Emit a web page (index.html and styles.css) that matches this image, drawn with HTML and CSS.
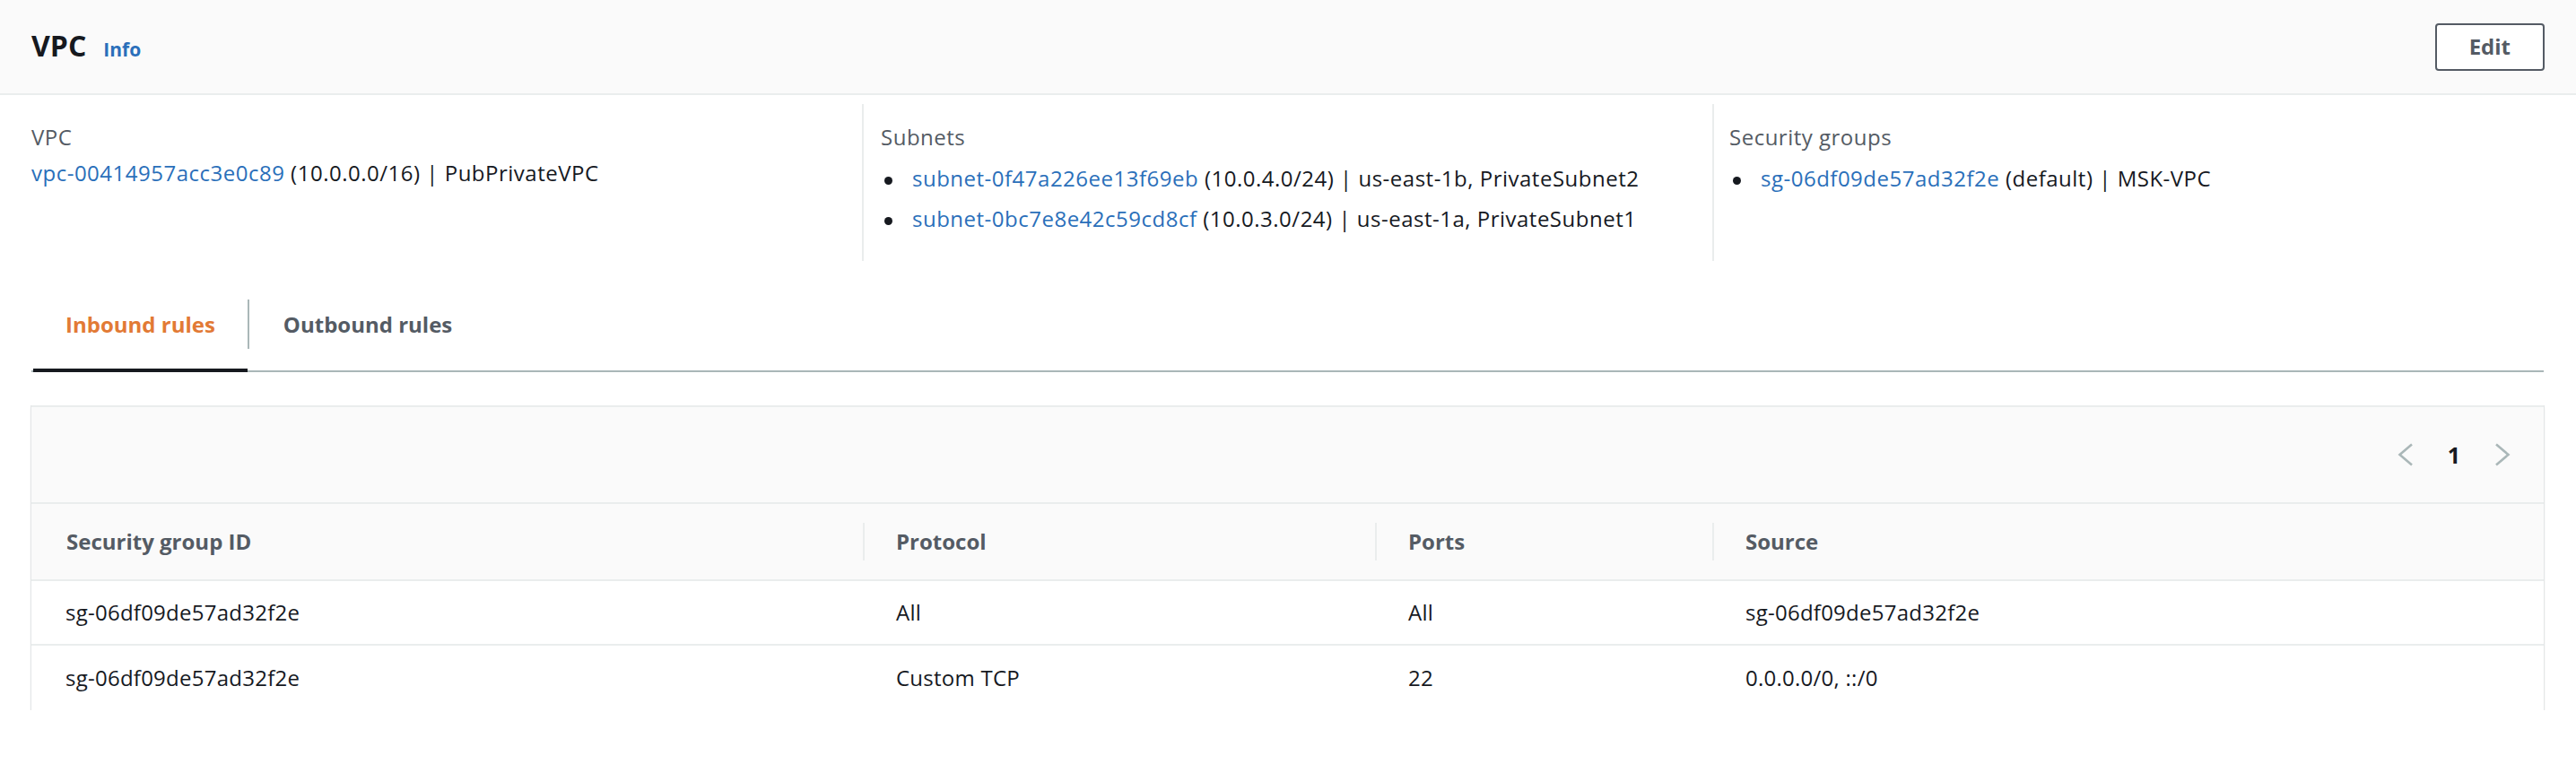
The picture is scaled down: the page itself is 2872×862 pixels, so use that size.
FILE: index.html
```html
<!DOCTYPE html>
<html lang="en">
<head>
<meta charset="utf-8">
<title>VPC</title>
<link rel="stylesheet" href="styles.css">
</head>
<body>
<header class="head">
  <div class="title-group">
    <h2 class="title">VPC</h2>
    <a class="info">Info</a>
  </div>
  <button class="btn">Edit</button>
</header>
<main class="page">
  <section class="columns">
    <div class="col">
      <div class="label">VPC</div>
      <div class="value"><a class="link">vpc-00414957acc3e0c89</a> (10.0.0.0/16) | PubPrivateVPC</div>
    </div>
    <div class="col col-bordered">
      <div class="label">Subnets</div>
      <ul class="list">
        <li><a class="link">subnet-0f47a226ee13f69eb</a> (10.0.4.0/24) | us-east-1b, PrivateSubnet2</li>
        <li><a class="link">subnet-0bc7e8e42c59cd8cf</a> (10.0.3.0/24) | us-east-1a, PrivateSubnet1</li>
      </ul>
    </div>
    <div class="col col-bordered col-last">
      <div class="label">Security groups</div>
      <ul class="list">
        <li><a class="link">sg-06df09de57ad32f2e</a> (default) | MSK-VPC</li>
      </ul>
    </div>
  </section>

  <nav class="tabs">
    <div class="tab tab-active">Inbound rules</div>
    <span class="tab-sep"></span>
    <div class="tab">Outbound rules</div>
  </nav>

  <div class="table-wrap">
    <div class="toolbar">
      <div class="pager">
        <svg class="chev" width="18" height="26" viewBox="0 0 18 26"><path d="M16 1.5 L2.5 13 L16 24.5" fill="none" stroke="#aab7b8" stroke-width="2.6"/></svg>
        <span class="page-num">1</span>
        <svg class="chev" width="18" height="26" viewBox="0 0 18 26"><path d="M2 1.5 L15.5 13 L2 24.5" fill="none" stroke="#aab7b8" stroke-width="2.6"/></svg>
      </div>
    </div>
    <div class="rules" role="table">
      <div class="row row-head" role="row">
        <div class="th" role="columnheader">Security group ID</div>
        <div class="th sep" role="columnheader">Protocol</div>
        <div class="th sep" role="columnheader">Ports</div>
        <div class="th sep" role="columnheader">Source</div>
      </div>
      <div class="row" role="row">
        <div class="td" role="cell">sg-06df09de57ad32f2e</div>
        <div class="td" role="cell">All</div>
        <div class="td" role="cell">All</div>
        <div class="td" role="cell">sg-06df09de57ad32f2e</div>
      </div>
      <div class="row row-last" role="row">
        <div class="td" role="cell">sg-06df09de57ad32f2e</div>
        <div class="td" role="cell">Custom TCP</div>
        <div class="td" role="cell">22</div>
        <div class="td" role="cell">0.0.0.0/0, ::/0</div>
      </div>
    </div>
  </div>
</main>
</body>
</html>
```

FILE: styles.css
```css
* { box-sizing: border-box; }

html, body {
  margin: 0;
  padding: 0;
  background: #ffffff;
}

body {
  font-family: "Open Sans", "Noto Sans", sans-serif;
  font-size: 24px;
  line-height: 40px;
  letter-spacing: 0.5px;
  color: #16191f;
}

.head {
  height: 106px;
  background: #fafafa;
  border-bottom: 2px solid #eaeded;
  display: flex;
  align-items: center;
  justify-content: space-between;
  padding: 0 35px 0 35px;
}

.title-group {
  display: flex;
  align-items: baseline;
}

.title {
  margin: 0;
  font-size: 32px;
  line-height: 44px;
  font-weight: 700;
  letter-spacing: 0;
  color: #16191f;
}

.info {
  margin-left: 19px;
  font-size: 21px;
  font-weight: 700;
  letter-spacing: 0;
  color: #2a6fba;
}

.btn {
  height: 53px;
  padding: 0 36px;
  background: #ffffff;
  border: 2px solid #545b64;
  border-radius: 4px;
  font-family: inherit;
  font-size: 24px;
  font-weight: 700;
  letter-spacing: 0;
  color: #545b64;
  line-height: 1;
}

.page {
  padding: 0 36px 0 35px;
}

.columns {
  display: grid;
  grid-template-columns: 926px 948px 1fr;
  margin-top: 10px;
}

.col {
  padding: 17px 20px 25px 0;
}

.col-bordered {
  border-left: 2px solid #eaeded;
  padding-left: 19px;
}

.col-last {
  padding-left: 17px;
}

.label {
  color: #545b64;
}

.link {
  color: #2a6fba;
}

.list {
  list-style: none;
  margin: 3px 0 0;
  padding: 0;
  line-height: 45px;
}

.list li::before {
  content: "";
  display: inline-block;
  width: 9px;
  height: 9px;
  border-radius: 50%;
  background: #16191f;
  margin: 0 22px 0 4px;
  vertical-align: middle;
}

.tabs {
  display: flex;
  align-items: flex-start;
  margin-top: 28px;
  border-bottom: 2px solid #aab7b8;
}

.tab {
  padding: 23px 36px 29px;
  font-weight: 700;
  letter-spacing: 0;
  color: #545b64;
  border-bottom: 4px solid transparent;
  margin-bottom: -2px;
}

.tab:first-child {
  margin-left: 2px;
}

.tab-active {
  color: #e27a35;
  border-bottom-color: #16191f;
}

.tab + .tab-sep + .tab {
  padding-left: 38px;
}

.tab-sep {
  width: 2px;
  height: 55px;
  margin-top: 15px;
  background: #aab7b8;
}

.table-wrap {
  margin-top: 37px;
  border-top: 2px solid #eaeded;
  background: #ffffff;
  box-shadow: -1px 0 0 0 #e3e6e7, 1px 0 0 0 #e3e6e7, 0 2px 1px 0 rgba(0, 28, 36, 0.35), 0 3px 3px 0 rgba(0, 28, 36, 0.12);
}

.toolbar {
  height: 108px;
  background: #fafafa;
  border-bottom: 2px solid #eaeded;
  display: flex;
  align-items: center;
  justify-content: flex-end;
  padding-right: 37px;
}

.pager {
  display: flex;
  align-items: center;
  gap: 38px;
}

.chev {
  display: block;
}

.page-num {
  font-weight: 700;
  font-size: 25px;
  letter-spacing: 0;
  color: #16191f;
}

.row {
  display: grid;
  grid-template-columns: 927px 571px 376px 1fr;
  align-items: center;
  height: 72px;
  border-bottom: 2px solid #eaeded;
}

.row-head {
  height: 86px;
  background: #fafafa;
  align-items: stretch;
}

.row-last {
  height: 72px;
  border-bottom: none;
}

.th {
  display: flex;
  align-items: center;
  padding-left: 39px;
  font-weight: 700;
  letter-spacing: 0;
  color: #545b64;
}

.th.sep {
  padding-left: 37px;
  background-image: linear-gradient(#eaeded, #eaeded);
  background-repeat: no-repeat;
  background-size: 2px 42px;
  background-position: left center;
}

.td {
  padding-left: 37px;
  letter-spacing: 0.25px;
  color: #16191f;
}

.td:first-child {
  padding-left: 38px;
}
```
